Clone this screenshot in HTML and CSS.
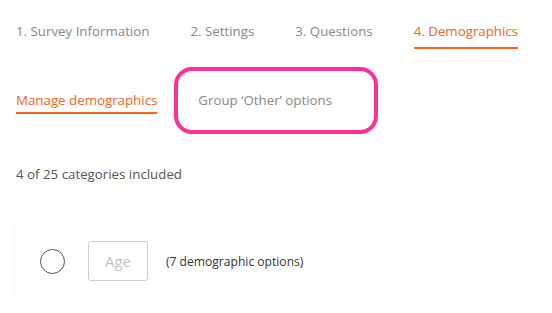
FILE: index.html
```html
<!DOCTYPE html>
<html lang="en">
<head>
  <meta charset="UTF-8" />
  <title>Demographics</title>
  <link rel="stylesheet" href="styles.css">
</head>
<body>

<nav class="steps">
  <a class="step">1. Survey Information</a>
  <a class="step">2. Settings</a>
  <a class="step">3. Questions</a>
  <a class="step active">4. Demographics</a>
</nav>

<div class="subtabs">
  <a class="subtab active">Manage demographics</a>
  <a class="subtab highlighted">Group ‘Other’ options</a>
</div>

<p class="count">4 of 25 categories included</p>

<div class="card">
  <span class="radio"></span>
  <span class="tag">Age</span>
  <span class="options">(7 demographic options)</span>
</div>

</body>
</html>
```

FILE: styles.css
```css
:root {
  --orange: #f0661e;
  --gray-text: #888;
  --pink: #ff2f95;
}

*, *::before, *::after {
  box-sizing: border-box;
}
body {
  margin: 0;
  font-family: 'Open Sans', 'Noto Sans', sans-serif;
  background: #fff;
  color: #333;
  overflow: hidden;
}

/* Step tabs */
.steps {
  display: flex;
  align-items: flex-start;
  gap: 41px;
  padding: 20px 16px 0 16px;
}
.step {
  font-size: 13.3px;
  line-height: 22px;
  color: var(--gray-text);
  padding-bottom: 5px;
  border-bottom: 2px solid transparent;
}
.step.active {
  color: var(--orange);
  border-bottom-color: var(--orange);
}

/* Sub tabs */
.subtabs {
  display: flex;
  align-items: flex-start;
  gap: 41px;
  margin-top: 40px;
  padding-left: 16px;
}
.subtab {
  font-size: 13.3px;
  line-height: 22px;
  color: var(--gray-text);
}
.subtab.active {
  color: var(--orange);
  border-bottom: 2px solid var(--orange);
  padding-bottom: 1px;
}
.subtab.highlighted {
  position: relative;
}
/* annotation outline */
.subtab.highlighted::after {
  content: '';
  position: absolute;
  left: -24px;
  top: -22px;
  width: 204px;
  height: 67px;
  border: 4px solid var(--pink);
  border-radius: 18px;
}

.count {
  margin: 50px 16px 0 16px;
  font-size: 13.3px;
  line-height: 20px;
  color: #555;
}

/* Category card */
.card {
  display: flex;
  align-items: center;
  margin: 41px 0 0 16px;
  height: 72px;
  padding-left: 24px;
  background: #fff;
  border-radius: 3px;
  box-shadow: 0 4px 12px rgba(0, 0, 0, 0.06);
}
.radio {
  width: 25px;
  height: 25px;
  border: 1px solid #555;
  border-radius: 50%;
}
.tag {
  margin-left: 23px;
  width: 60px;
  height: 40px;
  display: flex;
  align-items: center;
  justify-content: center;
  border: 1px solid #ccc;
  border-radius: 3px;
  font-size: 15px;
  color: #c4c4c4;
}
.options {
  margin-left: 18px;
  font-size: 12.1px;
  color: #333;
}
```
